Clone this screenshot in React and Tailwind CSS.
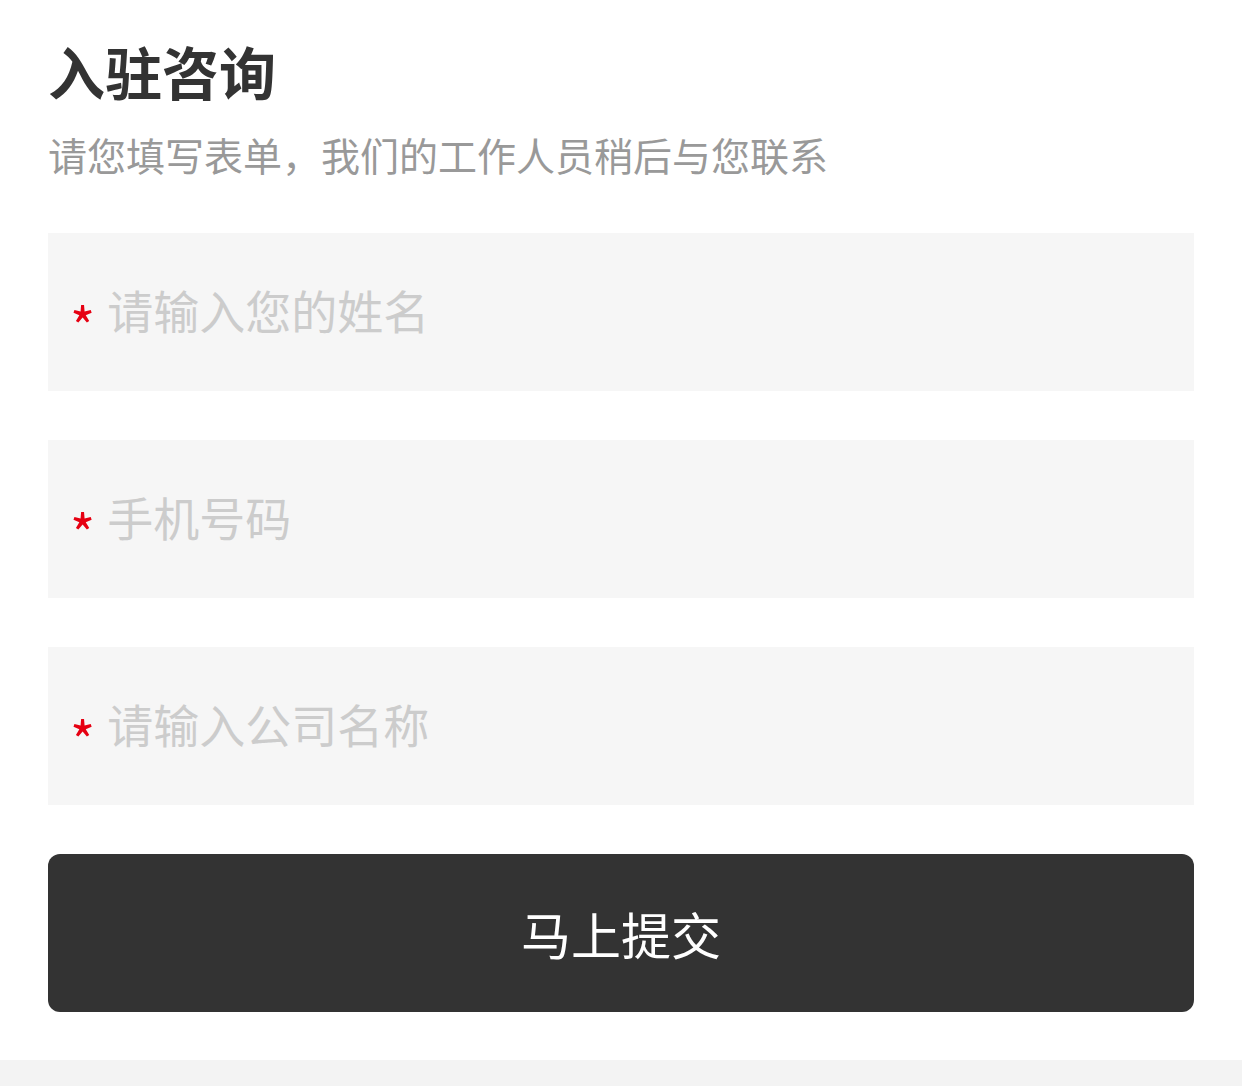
import React from 'react';

const fields = ['请输入您的姓名', '手机号码', '请输入公司名称'];

export default function App() {
  return (
    <div className="min-h-[1086px] bg-white flex flex-col" style={{ fontFamily: '"Noto Sans CJK SC", "Noto Sans", sans-serif' }}>
      <div className="flex-1 px-[48px] pt-[38px]">
        <h1 className="text-[57px] leading-[64px] font-bold text-[#333333]">入驻咨询</h1>
        <p className="mt-[28px] text-[39px] leading-[48px] text-[#999999]">请您填写表单，我们的工作人员稍后与您联系</p>

        <div className="mt-[55px] flex flex-col gap-[49px]">
          {fields.map((f) => (
            <div key={f} className="h-[158px] bg-[#f6f6f6] flex items-center pl-[22px] pr-[24px]">
              <span className="text-[#e60012] text-[54px] leading-none mt-[26px] mr-[12px]">*</span>
              <input
                placeholder={f}
                className="flex-1 bg-transparent outline-none text-[46px] leading-[60px] mb-[6px] text-[#333] placeholder-[#cccccc]"
              />
            </div>
          ))}
        </div>

        <button className="mt-[49px] w-full h-[158px] rounded-[12px] bg-[#333333] text-white text-[50px]">
          马上提交
        </button>
      </div>
      <div className="h-[26px] bg-[#f3f3f3]" />
    </div>
  );
}
